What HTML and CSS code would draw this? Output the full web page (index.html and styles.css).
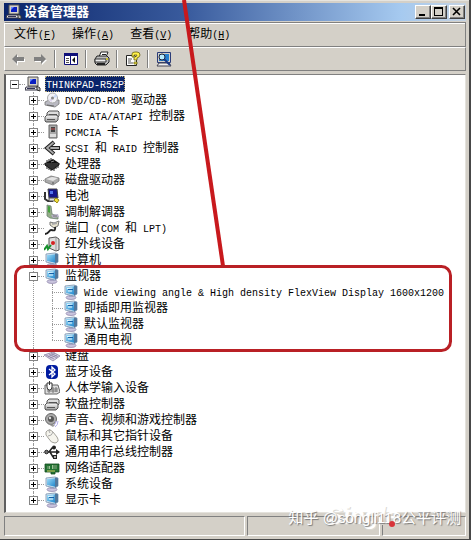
FILE: index.html
```html
<!DOCTYPE html>
<html lang="zh-CN">
<head>
<meta charset="utf-8">
<title>设备管理器</title>
<link rel="stylesheet" href="styles.css">
</head>
<body>
<svg class="sprite" aria-hidden="true">
  <defs>
    <linearGradient id="screen" x1="0" y1="0" x2="1" y2="1"><stop offset="0" stop-color="#9fdcf8"/><stop offset="1" stop-color="#1f86cc"/></linearGradient>
    <linearGradient id="metal" x1="0" y1="0" x2="0" y2="1"><stop offset="0" stop-color="#fff"/><stop offset="1" stop-color="#999"/></linearGradient>
  </defs>
  <symbol id="pc" viewBox="0 0 16 16"><path d="M3 1h10v9H3z" fill="#d4d0c8" stroke="#555"/><path d="M5 3h6v5H5z" fill="#0a1fc0"/><path d="M5 3h3l-3 3z" fill="#6b8cff"/><path d="M1 11h11l1 3H0z" fill="#eee" stroke="#334"/><path d="M2 12.500h8" stroke="#335"/><path d="M12 10l3 2v3l-3-1z" fill="#bbb" stroke="#333"/></symbol>
  <symbol id="monitor" viewBox="0 0 16 16"><ellipse cx="8" cy="13.500" rx="5" ry="2" fill="#c9c4dd" stroke="#8c83a8" stroke-width=".7"/><path d="M6 10h4v3H6z" fill="#a9a3c4"/><path d="M2 2l9-1 3 1v8l-3 2-9-2z" fill="#dbe8f2" stroke="#7591ad" stroke-width=".8"/><path d="M3 3l8-.7v8.500L3 9z" fill="url(#screen)"/><path d="M11 1.500l3 .7v7.500l-3 2z" fill="#52789c"/></symbol>
  <symbol id="display" viewBox="0 0 16 16"><use href="#monitor"/><path d="M4 4.500l5.500-.5M5 7h4" stroke="#e8faff"/><path d="M5 5.500h5" stroke="#1560a8"/></symbol>
  <symbol id="cd" viewBox="0 0 16 16"><path d="M1 10l4-2h10v4l-4 3-10-2z" fill="#b9b9c2" stroke="#777" stroke-width=".8"/><ellipse cx="8.500" cy="6" rx="5" ry="5" fill="#f2f2f7" stroke="#aaa"/><path d="M8.500 6l3-4 2 3z" fill="#c9d8f6"/><path d="M8.500 6l-4 2 3 2z" fill="#dcd2ec"/><circle cx="8.500" cy="6" r="1.500" fill="#888"/><path d="M3 13l7 1" stroke="#666"/></symbol>
  <symbol id="drives" viewBox="0 0 16 16"><path d="M3 5l2-2h9l1 1v4l-2 2H3z" fill="#ddd" stroke="#555"/><path d="M1 9l2-2h9l2 1v4l-2 2H2l-1-1z" fill="url(#metal)" stroke="#555"/><path d="M3 11.500h8M5 6.500h8" stroke="#555"/></symbol>
  <symbol id="card" viewBox="0 0 16 16"><path d="M5 1h8v13H5z" fill="#aaa" stroke="#666"/><path d="M7 3h4v5H7z" fill="#444"/><path d="M7 5h4" stroke="#c65050"/><path d="M6 10h6v3H6z" fill="#ddd"/></symbol>
  <symbol id="scsi" viewBox="0 0 16 16"><path d="M10 2L3 8l7 6M7 8h9" fill="none" stroke="#222" stroke-width="4"/><path d="M9.500 2.500L3 8l6.500 5.500M7 8h8" fill="none" stroke="#aaa" stroke-width="1.800"/></symbol>
  <symbol id="chip" viewBox="0 0 16 16"><path d="M1 7l8-4 6 4-7 5z" fill="#111"/><path d="M1 7v2l7 5 7-5V7" fill="#333" stroke="#111"/><path d="M3 6V4M5 5V3M7 4V2M3 9v4M5 11v3M7 12v3M10 12v3M12 10v3M14 9v3" stroke="#222"/><path d="M7 6l3-1" stroke="#888"/></symbol>
  <symbol id="disk" viewBox="0 0 16 16"><path d="M1 7l6-3 8 2v3l-6 4-8-3z" fill="#aaa" stroke="#777" stroke-width=".8"/><path d="M2 7l6-2 6 1-5 3z" fill="#e4e4e4"/><path d="M9 10v2" stroke="#555"/></symbol>
  <symbol id="battery" viewBox="0 0 16 16"><path d="M4 1h9l1 9H5z" fill="#15158c" stroke="#444"/><path d="M6 3h3v3H6z" fill="#5374ee"/><path d="M1 4v7l3 2h5" fill="none" stroke="#333" stroke-width="2"/><path d="M5 10h7v3H5z" fill="#ddd" stroke="#555"/><path d="M10 12l2-2 3 2-2 3z" fill="#f3df3e" stroke="#998b12"/></symbol>
  <symbol id="modem" viewBox="0 0 16 16"><path d="M3 1l4 1 1 8 6 2v3l-8-1-3-2z" fill="#94ae88" stroke="#6d8074" stroke-width=".8"/><path d="M4 2l2 .5V9L4 8z" fill="#44a13d"/><path d="M7 11l7-1 1 3-6 1z" fill="#b7b0c9"/><path d="M9 12h4" stroke="#777"/></symbol>
  <symbol id="plug" viewBox="0 0 16 16"><path d="M6 2l4 1 5-2-1 5-4 2-4-3z" fill="#e7e3cf" stroke="#777"/><path d="M8 4l5-1" stroke="#aaa" stroke-width="2"/><path d="M11 7c1 5-2 3-4 3s-2 4-6 4" fill="none" stroke="#222" stroke-width="2"/></symbol>
  <symbol id="infrared" viewBox="0 0 16 16"><path d="M5 2l7-1 3 2v11l-3 1-7-3z" fill="#ddd" stroke="#555"/><path d="M12 2v12" stroke="#999"/><circle cx="9" cy="7" r="2" fill="#d42222"/><path d="M0 14l3-4 1 3 3-4" fill="none" stroke="#16902d" stroke-width="2"/></symbol>
  <symbol id="keyboard" viewBox="0 0 16 16"><path d="M0 7l9-3 7 4-7 5z" fill="#d5cee1" stroke="#918aa7" stroke-width=".8"/><path d="M2 7l8 4M5 6l8 4M7 5l7 4M4 9l7-4M6 10l7-3" stroke="#867e9f" stroke-width=".7"/></symbol>
  <symbol id="bluetooth" viewBox="0 0 16 16"><rect x="2" y="1" width="12" height="14" rx="4" fill="#001ba0"/><path d="M5 5l6 5-3 3V3l3 3-6 5" fill="none" stroke="#fff" stroke-width="1.300"/></symbol>
  <symbol id="hid" viewBox="0 0 16 16"><path d="M1 5h13l2 7-3 2H1z" fill="#ddd" stroke="#666"/><path d="M3 9h11M3 11h11M5 8v5M9 7v6M12 7v5" stroke="#777"/><path d="M3 3h5v4q0 3-2.500 3T3 7z" fill="#fff" stroke="#333"/><path d="M5.500 1v4" stroke="#333"/></symbol>
  <symbol id="sound" viewBox="0 0 16 16"><circle cx="7" cy="7" r="5.500" fill="#aaa" stroke="#666"/><circle cx="7" cy="7" r="3" fill="#555"/><circle cx="6" cy="6" r="1.200" fill="#ddd"/><path d="M4 12l5 3 2-2" fill="#999"/><path d="M12 9q0 3-2 4M14 9q0 4-3 6" fill="none" stroke="#b5b0ec"/></symbol>
  <symbol id="mouse" viewBox="0 0 16 16"><path d="M2 4q3-4 7 0l4 5q3 5-2 6-4 0-6-4L2 7z" fill="#f5f4ed" stroke="#a4a29b"/><path d="M4 8q4 0 5-4M6 5q-2-2 0-4" fill="none" stroke="#aaa"/></symbol>
  <symbol id="usb" viewBox="0 0 16 16"><path d="M2 8h11M5 8l3-4h3M6 8l3 5h3" fill="none" stroke="#222" stroke-width="1.500"/><path d="M12 5l4 3-4 3z" fill="#222"/><circle cx="2.500" cy="8" r="1.800" fill="#777" stroke="#222"/><rect x="9.500" y="11.500" width="3" height="3" fill="#aaa" stroke="#222"/><circle cx="10" cy="3.500" r="2" fill="#222"/></symbol>
  <symbol id="network" viewBox="0 0 16 16"><path d="M1 4h14v8h-4v2H7v-2H1z" fill="#237333" stroke="#124b1f" stroke-width=".8"/><path d="M3 6h3v3H3zM8 5h5v4H8z" fill="#9dc798"/><path d="M4 6v3M10 5v4M12 5v4" stroke="#155422"/><path d="M3 11h8" stroke="#d4ce60"/></symbol>
  <symbol id="back" viewBox="0 0 16 16"><path d="M3 9l5-5v4h7v3H8v4z" fill="#fff"/><path d="M2 8l5-5v3h7v4H7v3z" fill="#808080"/></symbol>
  <symbol id="forward" viewBox="0 0 16 16"><path d="M15 9l-5 5v-3H3V8h7" fill="#fff"/><path d="M14 8L9 3v3H2v4h7v3z" fill="#808080"/></symbol>
  <symbol id="pane" viewBox="0 0 16 16"><path d="M1.500 2.500h13v11h-13z" fill="#fff" stroke="#10107a"/><path d="M1 2h14v3H1z" fill="#10107a"/><path d="M7.500 5v9" stroke="#10107a"/><path d="M3 7.500h3M3 9.500h3M3 11.500h3" stroke="#555"/><path d="M12 6v6L9 9z" fill="#111"/></symbol>
  <symbol id="printer" viewBox="0 0 16 16"><path d="M5 6l2-5h7l-2 5z" fill="#fff" stroke="#222"/><path d="M8 3.500h4" stroke="#222"/><path d="M1 8l2-3h10l2 2v4l-3 3H3l-2-2z" fill="#bbb" stroke="#222"/><path d="M1 8h11v3H1z" fill="#eee" stroke="#333"/><path d="M3 13h8" stroke="#222" stroke-width="2"/><path d="M12 8h2" stroke="#c9bf30" stroke-width="2"/></symbol>
  <symbol id="help" viewBox="0 0 16 16"><path d="M1.500 4.500h8l2 2v8h-10z" fill="#fff" stroke="#222"/><path d="M3 8h4M3 10h3M3 12h5" stroke="#555"/><path d="M7 6V3q0-2 3-2h2q3 0 3 3 0 2-3 3v2H9V6q3 0 3-2H9v2z" fill="#fff04a" stroke="#665f10" stroke-width=".8"/><path d="M9 11h3v2H9z" fill="#fff04a" stroke="#665f10" stroke-width=".8"/></symbol>
  <symbol id="scan" viewBox="0 0 16 16"><path d="M1.500 1.500h13v10h-13z" fill="#d4d0c8" stroke="#2b3c78"/><path d="M3 3h10v7H3z" fill="#2680ce"/><path d="M3 12h10l2 3H1z" fill="#eee" stroke="#445"/><circle cx="6" cy="6" r="3" fill="#b9edff" stroke="#223"/><path d="M8 8l6 6" stroke="#1c3985" stroke-width="2"/></symbol>
</svg>

<main class="window">
  <header class="titlebar">
    <svg class="icon"><use href="#pc"/></svg>
    <h1>设备管理器</h1>
    <div class="controls">
      <button aria-label="最小化"><svg viewBox="0 0 12 10"><path d="M2 7h6v2H2z"/></svg></button>
      <button aria-label="最大化"><svg viewBox="0 0 12 10"><path d="M1 0h9v9H1zM2 2v6h7V2z" fill-rule="evenodd"/></svg></button>
      <button class="close" aria-label="关闭"><svg viewBox="0 0 12 10"><path d="M2 1l7 7M9 1L2 8" stroke="#000" stroke-width="1.600"/></svg></button>
    </div>
  </header>
  <nav class="menubar">
    <button>文件<span class="latin">(<u>F</u>)</span></button>
    <button>操作<span class="latin">(<u>A</u>)</span></button>
    <button>查看<span class="latin">(<u>V</u>)</span></button>
    <button>帮助<span class="latin">(<u>H</u>)</span></button>
  </nav>
  <div class="toolbar">
    <button aria-label="后退"><svg class="icon"><use href="#back"/></svg></button>
    <button aria-label="前进"><svg class="icon"><use href="#forward"/></svg></button>
    <i class="separator"></i>
    <button aria-label="显示控制台树"><svg class="icon"><use href="#pane"/></svg></button>
    <i class="separator"></i>
    <button aria-label="打印"><svg class="icon"><use href="#printer"/></svg></button>
    <i class="separator"></i>
    <button aria-label="属性"><svg class="icon"><use href="#help"/></svg></button>
    <i class="separator"></i>
    <button aria-label="扫描硬件改动"><svg class="icon"><use href="#scan"/></svg></button>
  </div>

  <section class="tree">
    <div class="row"><button class="toggle open" aria-label="折叠"></button><i class="link"></i><svg class="icon"><use href="#pc"/></svg><span class="label selected"><span class="latin">THINKPAD-R52P</span></span></div>
    <ul class="devices">
      <li><div class="row"><button class="toggle" aria-label="展开"></button><i class="link"></i><svg class="icon"><use href="#cd"/></svg><span class="label"><span class="latin">DVD/CD-ROM </span>驱动器</span></div></li>
      <li><div class="row"><button class="toggle" aria-label="展开"></button><i class="link"></i><svg class="icon"><use href="#drives"/></svg><span class="label"><span class="latin">IDE ATA/ATAPI </span>控制器</span></div></li>
      <li><div class="row"><button class="toggle" aria-label="展开"></button><i class="link"></i><svg class="icon"><use href="#card"/></svg><span class="label"><span class="latin">PCMCIA </span>卡</span></div></li>
      <li><div class="row"><button class="toggle" aria-label="展开"></button><i class="link"></i><svg class="icon"><use href="#scsi"/></svg><span class="label"><span class="latin">SCSI </span>和<span class="latin"> RAID </span>控制器</span></div></li>
      <li><div class="row"><button class="toggle" aria-label="展开"></button><i class="link"></i><svg class="icon"><use href="#chip"/></svg><span class="label">处理器</span></div></li>
      <li><div class="row"><button class="toggle" aria-label="展开"></button><i class="link"></i><svg class="icon"><use href="#disk"/></svg><span class="label">磁盘驱动器</span></div></li>
      <li><div class="row"><button class="toggle" aria-label="展开"></button><i class="link"></i><svg class="icon"><use href="#battery"/></svg><span class="label">电池</span></div></li>
      <li><div class="row"><button class="toggle" aria-label="展开"></button><i class="link"></i><svg class="icon"><use href="#modem"/></svg><span class="label">调制解调器</span></div></li>
      <li><div class="row"><button class="toggle" aria-label="展开"></button><i class="link"></i><svg class="icon"><use href="#plug"/></svg><span class="label">端口<span class="latin"> (COM </span>和<span class="latin"> LPT)</span></span></div></li>
      <li><div class="row"><button class="toggle" aria-label="展开"></button><i class="link"></i><svg class="icon"><use href="#infrared"/></svg><span class="label">红外线设备</span></div></li>
      <li><div class="row"><button class="toggle" aria-label="展开"></button><i class="link"></i><svg class="icon"><use href="#monitor"/></svg><span class="label">计算机</span></div></li>
      <li><div class="row"><button class="toggle open" aria-label="折叠"></button><i class="link"></i><svg class="icon"><use href="#display"/></svg><span class="label">监视器</span></div>
        <ul class="children">
          <li><div class="row"><i class="link"></i><svg class="icon"><use href="#display"/></svg><span class="label"><span class="latin">Wide viewing angle &amp; High density FlexView Display 1600x1200</span></span></div></li>
          <li><div class="row"><i class="link"></i><svg class="icon"><use href="#display"/></svg><span class="label">即插即用监视器</span></div></li>
          <li><div class="row"><i class="link"></i><svg class="icon"><use href="#display"/></svg><span class="label">默认监视器</span></div></li>
          <li><div class="row"><i class="link"></i><svg class="icon"><use href="#display"/></svg><span class="label">通用电视</span></div></li>
        </ul>
      </li>
      <li><div class="row"><button class="toggle" aria-label="展开"></button><i class="link"></i><svg class="icon"><use href="#keyboard"/></svg><span class="label">键盘</span></div></li>
      <li><div class="row"><button class="toggle" aria-label="展开"></button><i class="link"></i><svg class="icon"><use href="#bluetooth"/></svg><span class="label">蓝牙设备</span></div></li>
      <li><div class="row"><button class="toggle" aria-label="展开"></button><i class="link"></i><svg class="icon"><use href="#hid"/></svg><span class="label">人体学输入设备</span></div></li>
      <li><div class="row"><button class="toggle" aria-label="展开"></button><i class="link"></i><svg class="icon"><use href="#drives"/></svg><span class="label">软盘控制器</span></div></li>
      <li><div class="row"><button class="toggle" aria-label="展开"></button><i class="link"></i><svg class="icon"><use href="#sound"/></svg><span class="label">声音、视频和游戏控制器</span></div></li>
      <li><div class="row"><button class="toggle" aria-label="展开"></button><i class="link"></i><svg class="icon"><use href="#mouse"/></svg><span class="label">鼠标和其它指针设备</span></div></li>
      <li><div class="row"><button class="toggle" aria-label="展开"></button><i class="link"></i><svg class="icon"><use href="#usb"/></svg><span class="label">通用串行总线控制器</span></div></li>
      <li><div class="row"><button class="toggle" aria-label="展开"></button><i class="link"></i><svg class="icon"><use href="#network"/></svg><span class="label">网络适配器</span></div></li>
      <li><div class="row"><button class="toggle" aria-label="展开"></button><i class="link"></i><svg class="icon"><use href="#monitor"/></svg><span class="label">系统设备</span></div></li>
      <li><div class="row"><button class="toggle" aria-label="展开"></button><i class="link"></i><svg class="icon"><use href="#display"/></svg><span class="label">显示卡</span></div></li>
    </ul>
  </section>
  <footer class="statusbar"><span></span><span></span><span></span></footer>
</main>

<div class="logo-mark">Single</div>
<div class="watermark">知乎 @songli118公平评测</div>
<svg class="annotation" width="471" height="540" viewBox="0 0 471 540" aria-hidden="true">
  <path d="M184 0L223 266" stroke="#c8191d" stroke-width="4"/>
  <rect x="15.500" y="266.500" width="435" height="84" rx="9" fill="none" stroke="#b92025" stroke-width="3"/>
  <circle cx="392" cy="524" r="3" fill="#d8343a"/>
</svg>
</body>
</html>
```
FILE: styles.css
```css
* { box-sizing: border-box; }

body {
  margin: 0;
  position: relative;
  min-height: 100vh;
  display: flex;
  background: #484848;
  color: #000;
  font: 12px/16px "Liberation Sans", "Noto Sans CJK SC", sans-serif;
  overflow: hidden;
}

.sprite { position: absolute; width: 0; height: 0; }

button {
  border: 0;
  padding: 0;
  background: none;
  color: inherit;
  font: inherit;
}

.latin {
  font-family: "Liberation Mono", monospace;
  font-size: 10px;
  white-space: pre;
}

.icon { width: 16px; height: 16px; flex: none; display: block; }

.window {
  flex: 1;
  min-width: 0;
  margin: 0 2px 2px 0;
  padding: 2px 3px 3px 4px;
  display: flex;
  flex-direction: column;
  background: #d4d0c8;
  border-top: 1px solid #e6e4df;
}

.titlebar {
  height: 18px;
  display: flex;
  align-items: center;
  padding-left: 2px;
  background: linear-gradient(90deg, #0a246a, #3a5c9e 40%, #a6caf0 86%, #c4d2e2);
}

h1 {
  flex: 1;
  margin: 0 0 0 2px;
  color: #fff;
  font-size: 13px;
  line-height: 16px;
}

.controls { display: flex; padding-right: 1px; }

.controls button {
  width: 16px;
  height: 14px;
  background: #d4d0c8;
  border: 1px solid;
  border-color: #fff #404040 #404040 #fff;
  box-shadow: inset -1px -1px #808080;
}

.controls svg { display: block; width: 12px; height: 10px; margin: 1px; }
.controls .close { margin-left: 2px; }

.menubar {
  height: 25px;
  display: flex;
  align-items: center;
  gap: 16px;
  margin-top: 1px;
  padding-left: 9px;
  border: 1px solid #808080;
  border-left-color: #fff;
  box-shadow: inset 0 1px #fff;
}

.toolbar {
  height: 24px;
  display: flex;
  align-items: center;
  padding-left: 5px;
  border: 1px solid #808080;
  border-top-color: #fff;
  border-left-color: #fff;
}

.toolbar button { margin-right: 6px; }

.separator {
  width: 2px;
  height: 18px;
  margin-right: 7px;
  border-left: 1px solid #808080;
  border-right: 1px solid #fff;
}

.tree {
  flex: 1;
  margin-top: 3px;
  padding: 1px 0 4px 4px;
  background: #fff;
  border: 1px solid #808080;
  border-right-color: #e4e2dc;
  border-bottom-color: #e4e2dc;
  border-left: 2px solid #606060;
}

ul { list-style: none; margin: 0; padding: 0; }
.devices { margin-left: 19px; }
.children { margin-left: 23px; }

li { position: relative; }

li::before {
  content: "";
  position: absolute;
  top: 0;
  bottom: 0;
  left: 4px;
  border-left: 1px dotted #999;
}

.children > li::before { left: 0; }
li:last-child::before { bottom: 8px; }

.row { height: 16px; display: flex; align-items: center; }

.toggle {
  position: relative;
  width: 9px;
  height: 9px;
  flex: none;
  border: 1px solid #848484;
  background:
    linear-gradient(#000, #000) center / 5px 1px no-repeat,
    linear-gradient(#000, #000) center / 1px 5px no-repeat,
    #fff;
}

.toggle.open { background: linear-gradient(#000, #000) center / 5px 1px no-repeat, #fff; }

.link { width: 6px; flex: none; border-top: 1px dotted #999; }
.children .link { width: 11px; }

.label {
  margin-left: 4px;
  padding: 0 1px;
  height: 16px;
  line-height: 16px;
  white-space: nowrap;
}

.label .latin { line-height: 14px; }

.selected {
  background: #0a246a;
  color: #fff;
  outline: 1px dotted #b5a875;
  outline-offset: -1px;
}

.statusbar {
  height: 20px;
  margin-top: 3px;
  display: grid;
  grid-template-columns: 242fr 134fr 84fr;
  gap: 2px;
}

.statusbar span {
  border: 1px solid;
  border-color: #808080 #fff #fff #808080;
}

.annotation { position: absolute; left: 0; top: 0; }

.watermark,
.logo-mark {
  position: absolute;
  right: 10px;
  bottom: 13px;
  color: #fff;
  white-space: nowrap;
}

.watermark {
  font-size: 15px;
  line-height: 20px;
  text-shadow: 1px 1px 1px #777;
}

.logo-mark {
  right: 72px;
  font: italic bold 24px/24px "Liberation Sans", sans-serif;
  text-shadow: 1px 1px #dcdad5;
}
```
